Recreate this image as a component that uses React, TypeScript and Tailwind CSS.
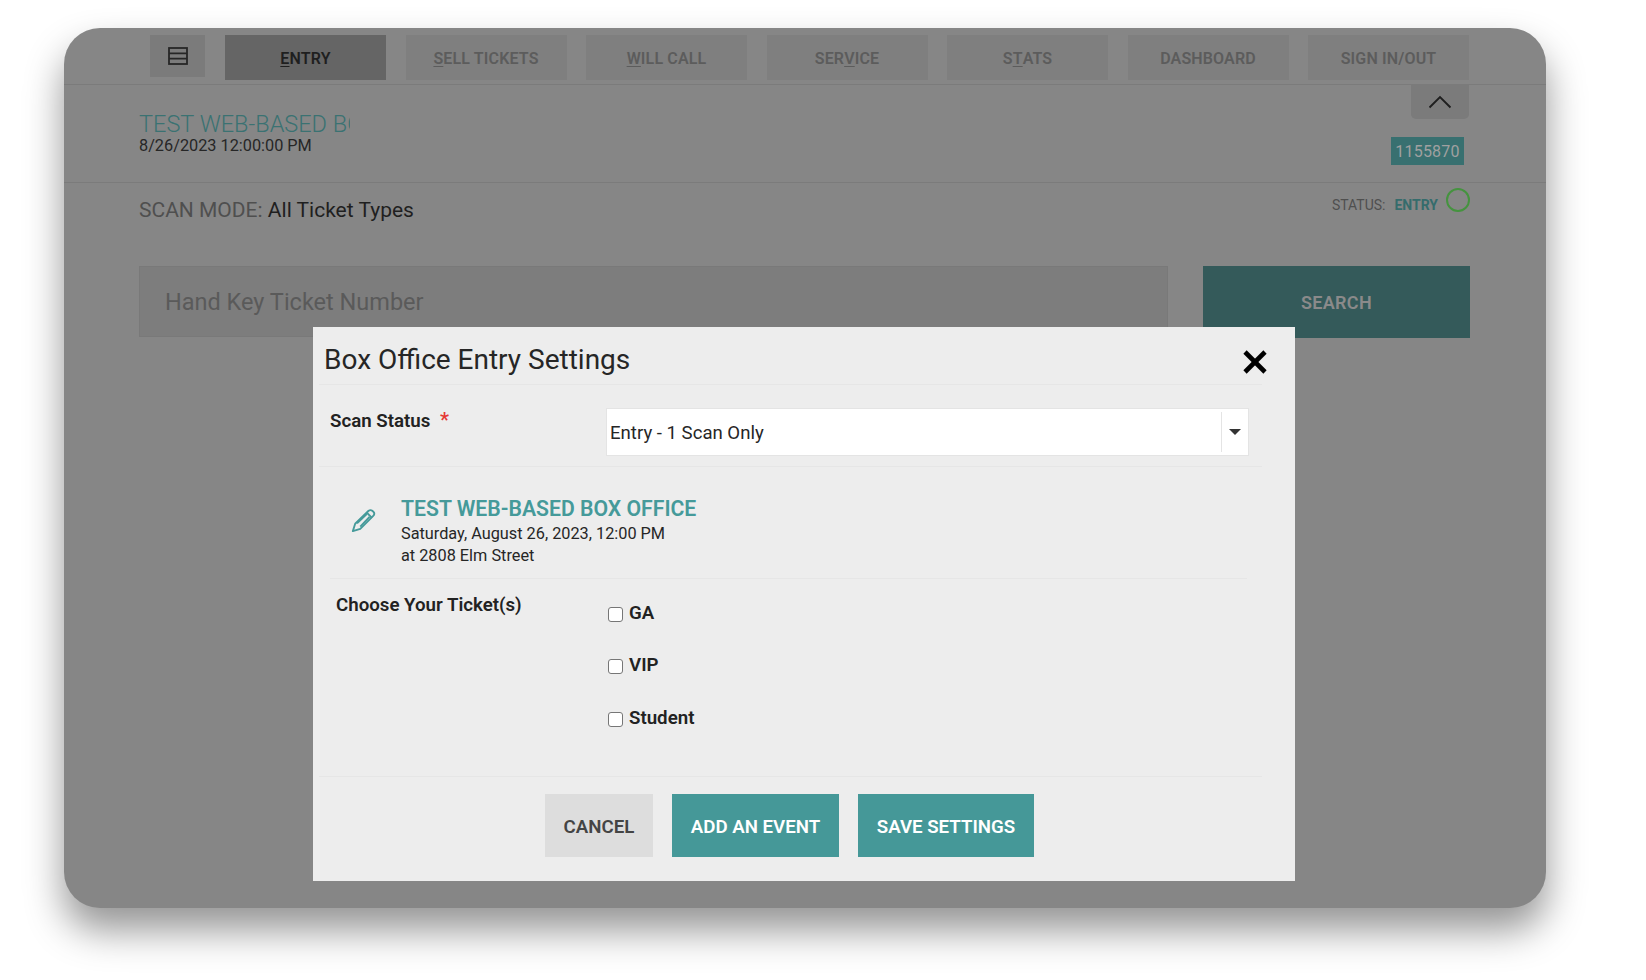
import React from "react";

const tabs: { pre: string; u: string; post: string; active?: boolean }[] = [
  { pre: "", u: "E", post: "NTRY", active: true },
  { pre: "", u: "S", post: "ELL TICKETS" },
  { pre: "", u: "W", post: "ILL CALL" },
  { pre: "SER", u: "V", post: "ICE" },
  { pre: "S", u: "T", post: "ATS" },
  { pre: "DASHBOARD", u: "", post: "" },
  { pre: "SIGN IN/OUT", u: "", post: "" },
];

function Check({ label }: { label: string }) {
  return (
    <label className="flex items-center h-[22px] gap-[6px]">
      <span className="w-[15px] h-[15px] rounded-[3px] bg-white border border-[#767676]" />
      <span className="-mt-[2px] text-[18.7px] font-semibold text-[#222]">{label}</span>
    </label>
  );
}

export default function App() {
  return (
    <div
      className="w-[1646px] h-[980px] bg-white pl-[64px] pt-[28px] overflow-hidden"
      style={{ fontFamily: "Roboto, sans-serif" }}
    >
      <div className="relative w-[1482px] h-[880px] rounded-[36px] bg-[#868686] shadow-[0_22px_38px_rgba(0,0,0,0.42)] overflow-hidden">
        {/* nav */}
        <div className="h-[57px] pt-[7px] pl-[86px] flex items-start gap-[20px] border-b border-[#7b7b7b]">
          <div className="w-[55px] h-[42px] bg-[#7b7b7b] flex items-center justify-center">
            <svg width="20" height="18" viewBox="0 0 20 18" fill="none" stroke="#262626" strokeWidth="1.8">
              <rect x="1" y="1" width="18" height="16" />
              <line x1="1" y1="6.4" x2="19" y2="6.4" />
              <line x1="1" y1="11.6" x2="19" y2="11.6" />
            </svg>
          </div>
          <div className="flex gap-[19.5px]">
            {tabs.map((t) => (
              <div
                key={t.pre + t.u + t.post}
                className={`w-[161px] h-[45px] flex items-center justify-center text-[16px] tracking-[0.15px] font-semibold pt-[2px] ${
                  t.active ? "bg-[#656565] text-[#1f1f1f]" : "bg-[#7f7f7f] text-[#5c5c5c]"
                }`}
              >
                {t.pre}
                <span className="underline underline-offset-2">{t.u}</span>
                {t.post}
              </div>
            ))}
          </div>
        </div>

        {/* event header */}
        <div className="h-[98px] pl-[75px] pr-[77px] border-b border-[#7b7b7b] flex justify-between">
          <div className="pt-[26px]">
            <div className="w-[211px] overflow-hidden whitespace-nowrap text-[23.5px] leading-[26px] font-light text-[#3a7272]">
              TEST WEB-BASED BOX OFFICE
            </div>
            <div className="text-[16.3px] leading-[18px] text-[#262626]">8/26/2023 12:00:00 PM</div>
          </div>
          <div className="flex flex-col items-end">
            <div className="w-[58px] h-[34px] bg-[#7b7b7b] rounded-b-[5px] flex items-center justify-center">
              <svg width="24" height="14" viewBox="0 0 24 14" fill="none" stroke="#1f1f1f" strokeWidth="1.9">
                <polyline points="1.5,12.5 12,2 22.5,12.5" />
              </svg>
            </div>
            <div className="mt-[18px] mr-[5px] w-[73px] h-[28px] pt-[2px] bg-[#387070] text-[#a0a0a0] text-[16px] tracking-[0.2px] flex items-center justify-center">
              1155870
            </div>
          </div>
        </div>

        {/* scan mode */}
        <div className="h-[83px] pl-[75px] pr-[76px] flex justify-between">
          <div className="pt-[13px] text-[21px] leading-[28px] text-[#4f4f4f]">
            SCAN MODE: <span className="text-[#1f1f1f]">All Ticket Types</span>
          </div>
          <div className="pt-[5px] flex items-start">
            <span className="mt-[8px] text-[14px] leading-[18px] text-[#4f4f4f]">STATUS:</span>
            <span className="mt-[8px] ml-[9px] text-[14px] leading-[18px] font-bold text-[#356c6c]">ENTRY</span>
            <span className="ml-[8px] w-[24px] h-[24px] rounded-full border-2 border-[#45933f]" />
          </div>
        </div>

        {/* search */}
        <div className="pl-[75px] pr-[76px] flex gap-[35px]">
          <div className="w-[1029px] h-[71px] bg-[#7d7d7d] border border-[#797979] pl-[25px] pt-[3px] flex items-center text-[23.5px] text-[#5a5a5a]">
            Hand Key Ticket Number
          </div>
          <div className="w-[267px] h-[72px] pt-[1px] bg-[#345a5a] flex items-center justify-center text-[18px] tracking-[0.3px] font-semibold text-[#8a8a8a]">
            SEARCH
          </div>
        </div>

        {/* modal */}
        <div className="absolute left-[249px] top-[299px] w-[982px] h-[554px] bg-[#ededed] pl-[6px] pr-[33px]">
          <svg className="absolute right-[27px] top-[22px]" width="26" height="26" viewBox="0 0 26 26" fill="none" stroke="#000" strokeWidth="4.6">
            <line x1="3" y1="3" x2="23" y2="23" />
            <line x1="23" y1="3" x2="3" y2="23" />
          </svg>

          <div className="h-[58px] border-b border-[#e6e6e6] pl-[5px] pt-[8px] flex items-center">
            <span className="text-[28px] text-[#262626]">Box Office Entry Settings</span>
          </div>

          <div className="h-[82px] border-b border-[#e6e6e6] pl-[11px] pr-[7px] pt-[23px] flex">
            <div className="w-[276px] text-[18.7px] leading-[24px] font-semibold text-[#222]">
              Scan Status <span className="ml-[5px] text-[20px] text-[#e53935]">*</span>
            </div>
            <div className="w-[643px] h-[48px] bg-white border border-[#e4e4e4] flex items-center">
              <span className="flex-1 pl-[3px] pt-[3px] text-[18.6px] text-[#262626]">Entry - 1 Scan Only</span>
              <div className="w-[27px] h-[40px] border-l border-[#e4e4e4] flex items-center justify-center">
                <span className="w-0 h-0 border-x-[6px] border-x-transparent border-t-[6px] border-t-[#333]" />
              </div>
            </div>
          </div>

          <div className="ml-[11px] mr-[15px] h-[112px] border-b border-[#e6e6e6] pl-[21px] pt-[31px] flex">
            <svg className="mt-[10px]" width="25" height="25" viewBox="0 0 27 27" fill="none" stroke="#459a9a" strokeWidth="2" strokeLinejoin="round">
              <path d="M2 25 L4.5 17 L19 3 Q21 1.5 23 3 L24.5 4.5 Q26 6.5 24 8.5 L10 22.5 Z" />
              <line x1="17" y1="5" x2="22.5" y2="10.5" />
              <line x1="6.5" y1="16.5" x2="17" y2="6.5" />
              <line x1="10" y1="20" x2="20" y2="9.5" />
            </svg>
            <div className="ml-[25px] -mt-[2px]">
              <div className="text-[21.2px] leading-[26px] font-semibold text-[#459a9a]">TEST WEB-BASED BOX OFFICE</div>
              <div className="mt-[1px] text-[16.3px] leading-[22px] text-[#262626]">Saturday, August 26, 2023, 12:00 PM</div>
              <div className="text-[16.3px] leading-[22px] text-[#262626]">at 2808 Elm Street</div>
            </div>
          </div>

          <div className="h-[198px] border-b border-[#e6e6e6] pl-[17px] flex">
            <div className="w-[272px] pt-[14px] text-[18.7px] leading-[24px] font-semibold text-[#222]">
              Choose Your Ticket(s)
            </div>
            <div className="pt-[24px] flex flex-col gap-[30.5px]">
              <Check label="GA" />
              <Check label="VIP" />
              <Check label="Student" />
            </div>
          </div>

          <div className="pt-[17px] pl-[226px] flex gap-[19px]">
            <div className="w-[108px] h-[63px] pt-[3px] bg-[#dddddd] flex items-center justify-center text-[18.7px] font-semibold text-[#444]">CANCEL</div>
            <div className="w-[167px] h-[63px] pt-[3px] bg-[#459898] flex items-center justify-center text-[18.7px] font-semibold text-white">ADD AN EVENT</div>
            <div className="w-[176px] h-[63px] pt-[3px] bg-[#459898] flex items-center justify-center text-[18.7px] font-semibold text-white">SAVE SETTINGS</div>
          </div>
        </div>
      </div>
    </div>
  );
}
